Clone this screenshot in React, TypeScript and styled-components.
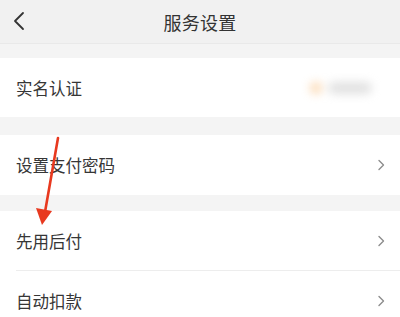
import React from "react";
import styled, { createGlobalStyle } from "styled-components";

const Global = createGlobalStyle`
  html, body { margin: 0; padding: 0; background: #f5f5f5; }
  body { font-family: "Noto Sans CJK SC", "Noto Sans", sans-serif; width: 400px; height: 317px; overflow: hidden; }
`;

const Page = styled.div`
  position: relative;
  width: 400px;
  height: 317px;
  background: #f4f4f4;
  display: flex;
  flex-direction: column;
`;

const Header = styled.div`
  height: 43px;
  background: #f1f1f1;
  border-bottom: 1px solid #e9e9e9;
  display: flex;
  align-items: center;
  justify-content: center;
  position: relative;
  flex-shrink: 0;
`;

const Back = styled.svg`
  position: absolute;
  left: 12px;
  top: 11px;
`;

const Title = styled.div`
  font-size: 18px;
  color: #333;
  letter-spacing: 0.3px;
`;

const Group = styled.div<{ $gap: number }>`
  margin-top: ${(p) => p.$gap}px;
  background: #fff;
  display: flex;
  flex-direction: column;
`;

const Row = styled.div<{ $h: number; $divider?: boolean }>`
  height: ${(p) => p.$h}px;
  display: flex;
  align-items: center;
  justify-content: space-between;
  padding: 0 14px 0 16px;
  position: relative;
  ${(p) =>
    p.$divider
      ? `&::after { content: ""; position: absolute; left: 16px; right: 0; bottom: 0; height: 1px; background: #ededed; }`
      : ""}
`;

const Label = styled.span`
  font-size: 16.5px;
  color: #363636;
`;

const Blur = styled.div`
  display: flex;
  align-items: center;
  gap: 6px;
  margin-right: 14px;
  filter: blur(5px);
  opacity: 0.5;
`;

const Dot = styled.div`
  width: 12px;
  height: 12px;
  border-radius: 50%;
  background: #f7b46a;
`;

const Smudge = styled.div`
  width: 44px;
  height: 12px;
  border-radius: 6px;
  background: #c4c4c4;
`;

const Arrow = styled.svg`
  position: absolute;
  left: 0;
  top: 0;
  pointer-events: none;
`;

const Chevron = () => (
  <svg width="10" height="14" viewBox="0 0 10 14">
    <path d="M3 2.5 L7.5 7 L3 11.5" fill="none" stroke="#8d8d8d" strokeWidth="1.4" strokeLinecap="round" strokeLinejoin="round" />
  </svg>
);

export default function App() {
  return (
    <>
      <Global />
      <Page>
        <Header>
          <Back width="16" height="20" viewBox="0 0 16 20">
            <path d="M11 2 L3 10 L11 18" fill="none" stroke="#333" strokeWidth="1.8" strokeLinecap="round" strokeLinejoin="round" />
          </Back>
          <Title>服务设置</Title>
        </Header>
        <Group $gap={14}>
          <Row $h={59}>
            <Label>实名认证</Label>
            <Blur>
              <Dot />
              <Smudge />
            </Blur>
          </Row>
        </Group>
        <Group $gap={18}>
          <Row $h={60}>
            <Label>设置支付密码</Label>
            <Chevron />
          </Row>
        </Group>
        <Group $gap={16}>
          <Row $h={60} $divider>
            <Label>先用后付</Label>
            <Chevron />
          </Row>
          <Row $h={60}>
            <Label>自动扣款</Label>
            <Chevron />
          </Row>
        </Group>
        <Arrow width="400" height="317" viewBox="0 0 400 317">
          <line x1="58" y1="138" x2="45" y2="212" stroke="#e8391f" strokeWidth="2.6" strokeLinecap="round" />
          <polygon points="36,208 52,211 42,225" fill="#e8391f" />
        </Arrow>
      </Page>
    </>
  );
}
